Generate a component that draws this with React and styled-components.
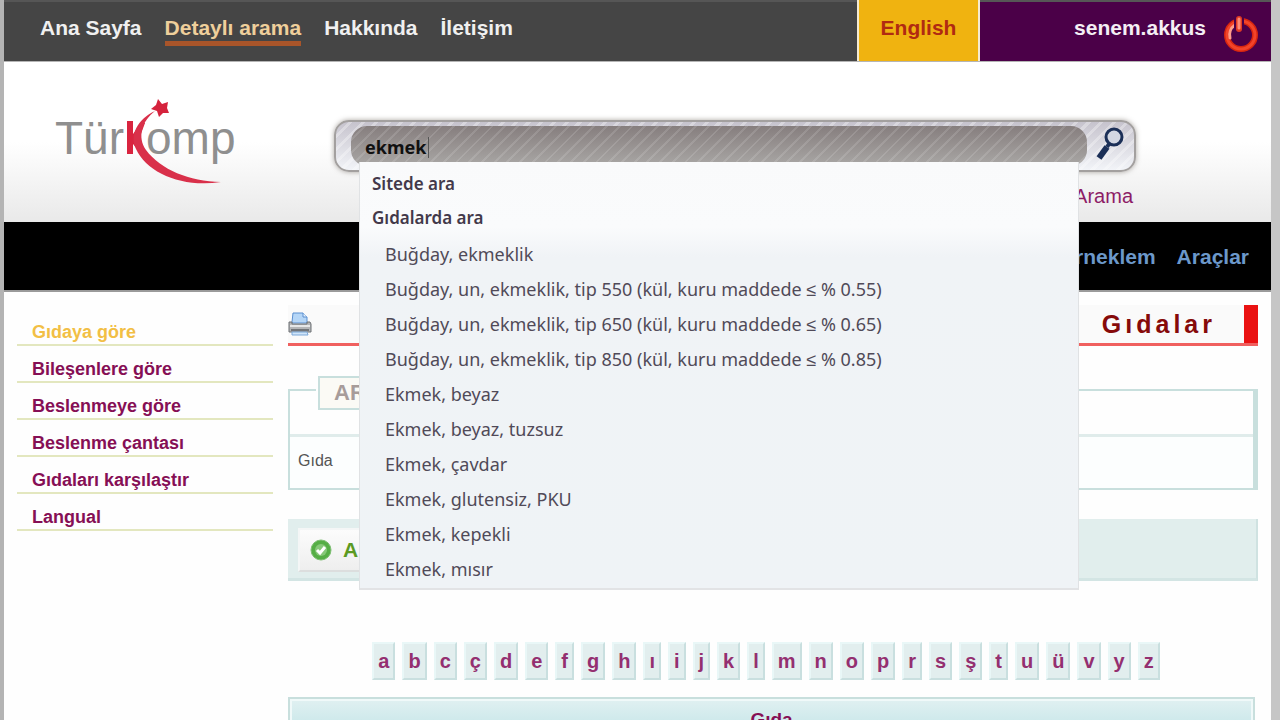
import React, { useState } from "react";
import styled, { createGlobalStyle, css } from "styled-components";

const GlobalStyle = createGlobalStyle`
  * {
    box-sizing: border-box;
  }
  body {
    margin: 0;
    background: #c8c8c8;
    font-family: "Liberation Sans", Arial, sans-serif;
  }
  a {
    text-decoration: none;
    color: inherit;
  }
  ul {
    list-style: none;
    margin: 0;
    padding: 0;
  }
`;

const Page = styled.div`
  height: 100vh;
  overflow: hidden;
  background: #fefefe;
  border-left: 4px solid #b4b4b4;
  border-right: 9px solid #c6c6c6;
`;

const TopBar = styled.header`
  display: flex;
  height: 62px;
  background: #454545;
  border-top: 2px solid #565656;
  border-bottom: 1px solid #b5b5b5;
  font-size: 21px;
  font-weight: bold;
`;

const TopNav = styled.nav`
  flex: 1;
  display: flex;
  align-items: flex-start;
  gap: 23px;
  padding: 13px 0 0 36px;
`;

const TopLink = styled.a`
  line-height: 26px;
  color: #f0f0f0;
  border-bottom: 5px solid transparent;
  ${({ $active }) =>
    $active &&
    css`
      color: #efcf9b;
      border-color: #a9552a;
    `}
`;

const Language = styled.a`
  width: 123px;
  margin-top: -2px;
  padding-top: 15px;
  line-height: 26px;
  text-align: center;
  color: #b02a12;
  background: #f0b310;
  border-left: 2px solid #f4ead2;
  border-right: 2px solid #f4ead2;
`;

const UserBox = styled.div`
  display: flex;
  align-items: flex-start;
  justify-content: flex-end;
  gap: 17px;
  width: 291px;
  padding: 13px 12px 0 0;
  line-height: 26px;
  color: #f4eef4;
  background: #4b0048;
`;

const IconButton = styled.button`
  display: block;
  padding: 0;
  border: 0;
  background: none;
  cursor: pointer;
  svg {
    display: block;
  }
`;

const Banner = styled.div`
  display: flex;
  align-items: flex-start;
  height: 160px;
  padding: 32px 135px 0 46px;
  background: linear-gradient(#fff 50%, #e9e9e9);
`;

const Logo = styled.a`
  width: 284px;
  svg {
    display: block;
  }
`;

const Search = styled.form`
  position: relative;
  flex: 1;
  margin-top: 26px;
`;

const SearchBar = styled.div`
  display: flex;
  align-items: center;
  justify-content: space-between;
  height: 52px;
  padding: 0 9px 0 15px;
  border: 2px solid #a3a09f;
  border-radius: 15px;
  background: repeating-linear-gradient(
      135deg,
      rgba(255, 255, 255, 0.3) 0 3px,
      transparent 3px 9px
    ),
    linear-gradient(#c6c3cd, #f2f4f8);
  box-shadow: 0 0 5px rgba(90, 80, 70, 0.5);
`;

const SearchInput = styled.input`
  flex: 1;
  min-width: 0;
  height: 40px;
  margin-right: 8px;
  padding: 2px 14px 0;
  border: 0;
  border-radius: 16px;
  outline: 0;
  font: bold 18px "Noto Sans", sans-serif;
  color: #111;
  background: repeating-linear-gradient(
      135deg,
      rgba(255, 255, 255, 0.12) 0 2px,
      transparent 2px 9px
    ),
    linear-gradient(#867e7e, #a9a7a5);
`;

const Caret = styled.span`
  position: absolute;
  left: 94px;
  top: 17px;
  width: 1px;
  height: 21px;
  background: #555;
`;

const AdvancedLink = styled.a`
  display: block;
  margin-top: 11px;
  padding-right: 3px;
  text-align: right;
  font-size: 20px;
  line-height: 26px;
  color: #8d1c66;
`;

const Suggestions = styled.div`
  position: absolute;
  z-index: 10;
  top: 42px;
  left: 25px;
  right: 57px;
  padding: 5px 0 1px;
  font-family: "Noto Sans", sans-serif;
  background: linear-gradient(#f9fafb, #fafbfc 65px, #f0f3f6 95px, #eff3f6);
  border: 1px solid #e0e2e4;
  border-top: 0;
  border-bottom: 2px solid #e2e3e5;
`;

const SuggestGroup = styled.a`
  display: block;
  padding-left: 12px;
  font-size: 17px;
  font-weight: 600;
  line-height: 34px;
  color: #43394a;
`;

const SuggestList = styled.ul`
  padding-top: 2px;
`;

const SuggestItem = styled.a`
  display: block;
  padding-left: 25px;
  font-size: 18px;
  line-height: 35px;
  color: #504a58;
`;

const MainNav = styled.nav`
  display: flex;
  align-items: center;
  justify-content: flex-end;
  gap: 21px;
  height: 70px;
  padding: 2px 22px 0 0;
  background: #000;
  border-bottom: 2px solid #9a9a9a;
  font-size: 21px;
  font-weight: bold;
  color: #6c98ca;
`;

const Columns = styled.div`
  display: flex;
  align-items: flex-start;
  gap: 15px;
  padding: 13px 13px 0;
`;

const Sidebar = styled.ul`
  width: 256px;
  padding-top: 4px;
`;

const SideLink = styled.a`
  display: block;
  height: 37px;
  padding: 11px 0 0 15px;
  font-size: 18px;
  font-weight: bold;
  line-height: 24px;
  color: ${({ $active }) => ($active ? "#f2bf45" : "#860f55")};
  border-bottom: 2px solid #e3e7bf;
`;

const Main = styled.main`
  flex: 1;
  min-width: 0;
`;

const TitleBar = styled.div`
  display: flex;
  align-items: center;
  justify-content: space-between;
  height: 41px;
  padding-right: 42px;
  background: #fafafa;
  border-bottom: 3px solid #f0605f;
  box-shadow: inset -14px 0 0 #ea1212;
`;

const Title = styled.h1`
  margin: 0;
  font-size: 25px;
  line-height: 36px;
  letter-spacing: 4px;
  color: #860a0a;
`;

const SearchBox = styled.fieldset`
  min-width: 0;
  margin: 30px 0 0;
  padding: 0;
  border: 2px solid #c8dfdd;
  border-right-width: 5px;
`;

const Legend = styled.legend`
  height: 28px;
  margin-left: 26px;
  padding: 0 2px;
`;

const LegendLabel = styled.span`
  display: block;
  padding: 0 14px;
  font-size: 22px;
  font-weight: bold;
  line-height: 30px;
  color: #a79c9a;
  background: #fbfaf5;
  border: 2px solid #c8dfdd;
`;

const FieldRow = styled.div`
  display: flex;
  align-items: center;
  gap: 80px;
  height: 54px;
  margin-top: 30px;
  padding: 0 0 4px 8px;
  font-size: 16px;
  color: #555;
  background: #fcfefe;
  border-top: 3px solid #e0eceb;
`;

const FieldInput = styled.input`
  width: 300px;
  height: 28px;
  border: 1px solid #c8dfdd;
`;

const Actions = styled.div`
  height: 62px;
  margin-top: 29px;
  padding: 9px 10px;
  background: #e1eeed;
  border-right: 2px solid #cfe2e1;
  border-bottom: 3px solid #d3e5e4;
`;

const SubmitButton = styled.button`
  display: flex;
  align-items: center;
  gap: 11px;
  height: 44px;
  padding: 0 20px 0 10px;
  font: bold 21px "Liberation Sans", Arial, sans-serif;
  color: #5b9a22;
  background: linear-gradient(#fcfcfc, #eee);
  border: 2px solid #f4f6f6;
  border-bottom-color: #dcdede;
`;

const Letters = styled.nav`
  display: flex;
  justify-content: center;
  gap: 7px;
  margin-top: 61px;
  padding-right: 14px;
`;

const Letter = styled.a`
  padding: 0 4px;
  font-size: 20px;
  font-weight: bold;
  line-height: 34px;
  color: #942f70;
  background: #e2eeee;
  border: 2px solid #e9f7f7;
  border-right-color: #c9dfdf;
  border-bottom-color: #c9dfdf;
`;

const FoodTable = styled.table`
  width: calc(100% - 3px);
  margin-top: 17px;
  border-spacing: 0;
  border: 2px solid #c8dfdd;

  th {
    height: 42px;
    padding: 0;
    font-size: 19px;
    color: #860f55;
    border: 2px solid #f0f9f9;
    background: linear-gradient(#dff0f1, #bfe3e6);
  }
`;

const topLinks = ["Ana Sayfa", "Detaylı arama", "Hakkında", "İletişim"];

const sideLinks = [
  "Gıdaya göre",
  "Bileşenlere göre",
  "Beslenmeye göre",
  "Beslenme çantası",
  "Gıdaları karşılaştır",
  "Langual",
];

const foods = [
  "Buğday, ekmeklik",
  "Buğday, un, ekmeklik, tip 550 (kül, kuru maddede ≤ % 0.55)",
  "Buğday, un, ekmeklik, tip 650 (kül, kuru maddede ≤ % 0.65)",
  "Buğday, un, ekmeklik, tip 850 (kül, kuru maddede ≤ % 0.85)",
  "Ekmek, beyaz",
  "Ekmek, beyaz, tuzsuz",
  "Ekmek, çavdar",
  "Ekmek, glutensiz, PKU",
  "Ekmek, kepekli",
  "Ekmek, mısır",
];

const letters = [..."abcçdefghıijklmnoprsştuüvyz"];

const LogoMark = () => (
  <svg width="190" height="96" viewBox="50 94 190 96">
    <g
      fill="#8f8f8f"
      fontFamily="Liberation Sans, Arial, sans-serif"
      fontSize="46"
    >
      <text x="55" y="154">Tür</text>
      <text x="146" y="154">omp</text>
    </g>
    <path d="M127 121h6v13l8-11h4l-6 16 2 14-8-9v10h-6z" fill="#d9243f" />
    <path
      d="M155 111C138 119 129 135 136 149C147 173 182 188 221 182C189 181 161 170 146 150C137 137 142 121 155 111Z"
      fill="#d9304a"
    />
    <path d="M158 99l4 5 6-2-1 6 2 5-6 0-4 4-2-6-6-2 5-4z" fill="#d5233d" />
  </svg>
);

const PowerIcon = () => (
  <svg width="36" height="38" viewBox="0 0 36 38" fill="none" strokeLinecap="round">
    <circle cx="18" cy="20" r="14" stroke="#d8260f" strokeWidth="6" />
    <circle cx="18" cy="20" r="14" stroke="#f2442a" strokeWidth="3" />
    <path d="M7 23a12 12 0 0 1 5-13" stroke="#ff9d8a" strokeWidth="3" />
    <path d="M16 4v11" stroke="#4b0048" strokeWidth="10" />
    <path d="M16 4v10" stroke="#e03a24" strokeWidth="6" />
    <path d="M16 4v9" stroke="#ff8b76" strokeWidth="3" />
  </svg>
);

const SearchIcon = () => (
  <svg width="30" height="38" viewBox="0 0 30 38" fill="none" stroke="#1b2f57">
    <circle cx="19" cy="10" r="8" strokeWidth="3" fill="#d3d7e2" />
    <path d="M14 17l-2 3" strokeWidth="4" />
    <path d="M12 20L4 31" strokeWidth="6" />
  </svg>
);

const PrinterIcon = () => (
  <svg width="24" height="24" viewBox="0 0 24 24">
    <path d="M4 10L5 1h10l4 4v6H4z" fill="#b5d6f7" stroke="#5b8fd0" />
    <path d="M15 1v4h4" fill="#e4f1fd" stroke="#5b8fd0" />
    <path d="M1 10h3v2h15v-2h3l1 2v8H1z" fill="#b4b5b7" stroke="#6d7074" />
    <path d="M2 14h20" stroke="#e6e7e8" strokeWidth="2" />
    <path d="M3 18h18" stroke="#717478" strokeWidth="2" />
    <path d="M4 20h15l1 3H4z" fill="#cfe4f8" stroke="#7ba7d8" />
  </svg>
);

const CheckIcon = () => (
  <svg width="22" height="22" viewBox="0 0 22 22">
    <circle cx="11" cy="11" r="10" fill="#55ae45" stroke="#7fbf74" />
    <circle cx="11" cy="11" r="6" fill="#86c878" />
    <path d="M7 11l3 3 5-6" fill="none" stroke="#fff" strokeWidth="3" />
  </svg>
);

export default function App() {
  const [term, setTerm] = useState("ekmek");

  return (
    <Page>
      <GlobalStyle />
      <TopBar>
        <TopNav>
          {topLinks.map((label, i) => (
            <TopLink key={label} href="#" $active={i === 1}>
              {label}
            </TopLink>
          ))}
        </TopNav>
        <Language href="#">English</Language>
        <UserBox>
          <a href="#">senem.akkus</a>
          <IconButton type="button" aria-label="Çıkış">
            <PowerIcon />
          </IconButton>
        </UserBox>
      </TopBar>

      <Banner>
        <Logo href="#">
          <LogoMark />
        </Logo>
        <Search onSubmit={(e) => e.preventDefault()}>
          <SearchBar>
            <SearchInput
              aria-label="Ara"
              value={term}
              onChange={(e) => setTerm(e.target.value)}
            />
            <IconButton aria-label="Ara">
              <SearchIcon />
            </IconButton>
          </SearchBar>
          <Caret />
          <AdvancedLink href="#">Arama</AdvancedLink>
          <Suggestions>
            <SuggestGroup href="#">Sitede ara</SuggestGroup>
            <SuggestGroup href="#">Gıdalarda ara</SuggestGroup>
            <SuggestList>
              {foods.map((food) => (
                <li key={food}>
                  <SuggestItem href="#">{food}</SuggestItem>
                </li>
              ))}
            </SuggestList>
          </Suggestions>
        </Search>
      </Banner>

      <MainNav>
        <a href="#">Örneklem</a>
        <a href="#">Araçlar</a>
      </MainNav>

      <Columns>
        <Sidebar>
          {sideLinks.map((label, i) => (
            <li key={label}>
              <SideLink href="#" $active={i === 0}>
                {label}
              </SideLink>
            </li>
          ))}
        </Sidebar>
        <Main>
          <TitleBar>
            <IconButton type="button" aria-label="Yazdır">
              <PrinterIcon />
            </IconButton>
            <Title>Gıdalar</Title>
          </TitleBar>
          <SearchBox>
            <Legend>
              <LegendLabel>ARAMA</LegendLabel>
            </Legend>
            <FieldRow>
              <label htmlFor="food">Gıda</label>
              <FieldInput id="food" />
            </FieldRow>
          </SearchBox>
          <Actions>
            <SubmitButton type="button">
              <CheckIcon />
              Ara
            </SubmitButton>
          </Actions>
          <Letters>
            {letters.map((letter) => (
              <Letter key={letter} href="#">
                {letter}
              </Letter>
            ))}
          </Letters>
          <FoodTable>
            <thead>
              <tr>
                <th>Gıda</th>
              </tr>
            </thead>
          </FoodTable>
        </Main>
      </Columns>
    </Page>
  );
}
